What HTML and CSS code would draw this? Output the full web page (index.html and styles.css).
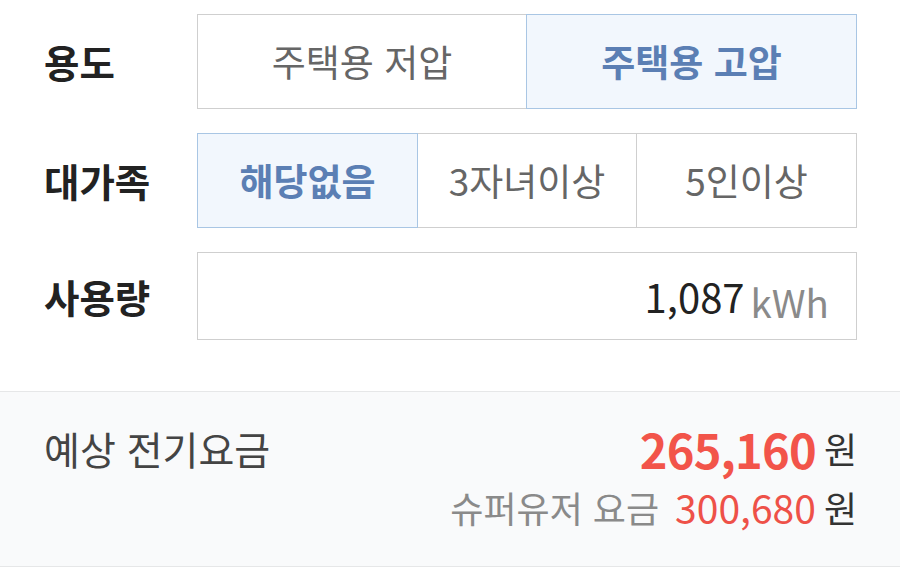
FILE: index.html
```html
<!DOCTYPE html>
<html lang="ko">
<head>
<meta charset="utf-8">
<link rel="stylesheet" href="styles.css">
</head>
<body>
<div class="form">
  <div class="row">
    <div class="label">용도</div>
    <div class="seg seg-2">
      <div class="opt">주택용 저압</div>
      <div class="opt on">주택용 고압</div>
    </div>
  </div>
  <div class="row">
    <div class="label">대가족</div>
    <div class="seg seg-3">
      <div class="opt on">해당없음</div>
      <div class="opt">3자녀이상</div>
      <div class="opt">5인이상</div>
    </div>
  </div>
  <div class="row">
    <div class="label">사용량</div>
    <div class="input">
      <span class="num">1,087</span><span class="unit">kWh</span>
    </div>
  </div>
</div>
<div class="result">
  <div class="line main">
    <span class="title">예상 전기요금</span>
    <span class="amt"><span class="big">265,160</span><span class="won">원</span></span>
  </div>
  <div class="line sub">
    <span class="amt"><span class="sublabel">슈퍼유저 요금</span><span class="mid">300,680</span><span class="won">원</span></span>
  </div>
</div>
</body>
</html>
```

FILE: styles.css
```css
* { box-sizing: border-box; }
html, body {
  margin: 0;
  padding: 0;
  background: #fff;
  font-family: "Noto Sans CJK KR", "Noto Sans", sans-serif;
  width: 900px;
  height: 583px;
  overflow: hidden;
}
.form {
  padding: 14px 43px 0 44px;
  display: flex;
  flex-direction: column;
  gap: 24px;
  height: 391px;
}
.row {
  display: grid;
  grid-template-columns: 153px 660px;
  align-items: center;
}
.label {
  font-size: 38.5px;
  font-weight: 700;
  color: #222;
  line-height: 1;
}
.seg {
  display: grid;
  height: 95px;
}
.seg-2 { grid-template-columns: 330px 330px; }
.seg-3 { grid-template-columns: 221px 219px 220px; }
.opt {
  display: flex;
  align-items: center;
  justify-content: center;
  border: 1px solid #cfcfcf;
  margin-left: -1px;
  font-size: 37px;
  color: #666;
  line-height: 1;
}
.opt:first-child { margin-left: 0; }
.opt.on {
  background: #f2f7fd;
  border-color: #a9c6e4;
  color: #5b7fb4;
  font-weight: 700;
  position: relative;
  z-index: 1;
}
.input {
  height: 88px;
  border: 1px solid #cfcfcf;
  display: flex;
  align-items: center;
  justify-content: flex-end;
  padding-right: 27px;
  gap: 6px;
}
.num {
  font-size: 40px;
  color: #222;
  line-height: 1;
}
.unit {
  font-size: 38.5px;
  color: #8a8a8a;
  line-height: 1;
  padding-top: 10px;
}
.result {
  background: #f9fafb;
  border-top: 1px solid #e6e7e8;
  border-bottom: 1px solid #e6e7e8;
  height: 176px;
  padding: 24px 43px 0 44px;
}
.line {
  display: flex;
  align-items: center;
  justify-content: space-between;
}
.main { height: 64px; }
.sub { height: 54px; justify-content: flex-end; }
.title {
  font-size: 39px;
  color: #444;
}
.amt {
  display: flex;
  align-items: center;
}
.big {
  font-size: 47px;
  font-weight: 700;
  color: #f2544a;
  letter-spacing: -0.8px;
}
.won {
  font-size: 36px;
  color: #333;
  margin-left: 8px;
}
.sublabel {
  font-size: 36px;
  color: #8a8a8a;
  margin-right: 16px;
}
.mid {
  font-size: 39px;
  color: #ee5148;
}
```
